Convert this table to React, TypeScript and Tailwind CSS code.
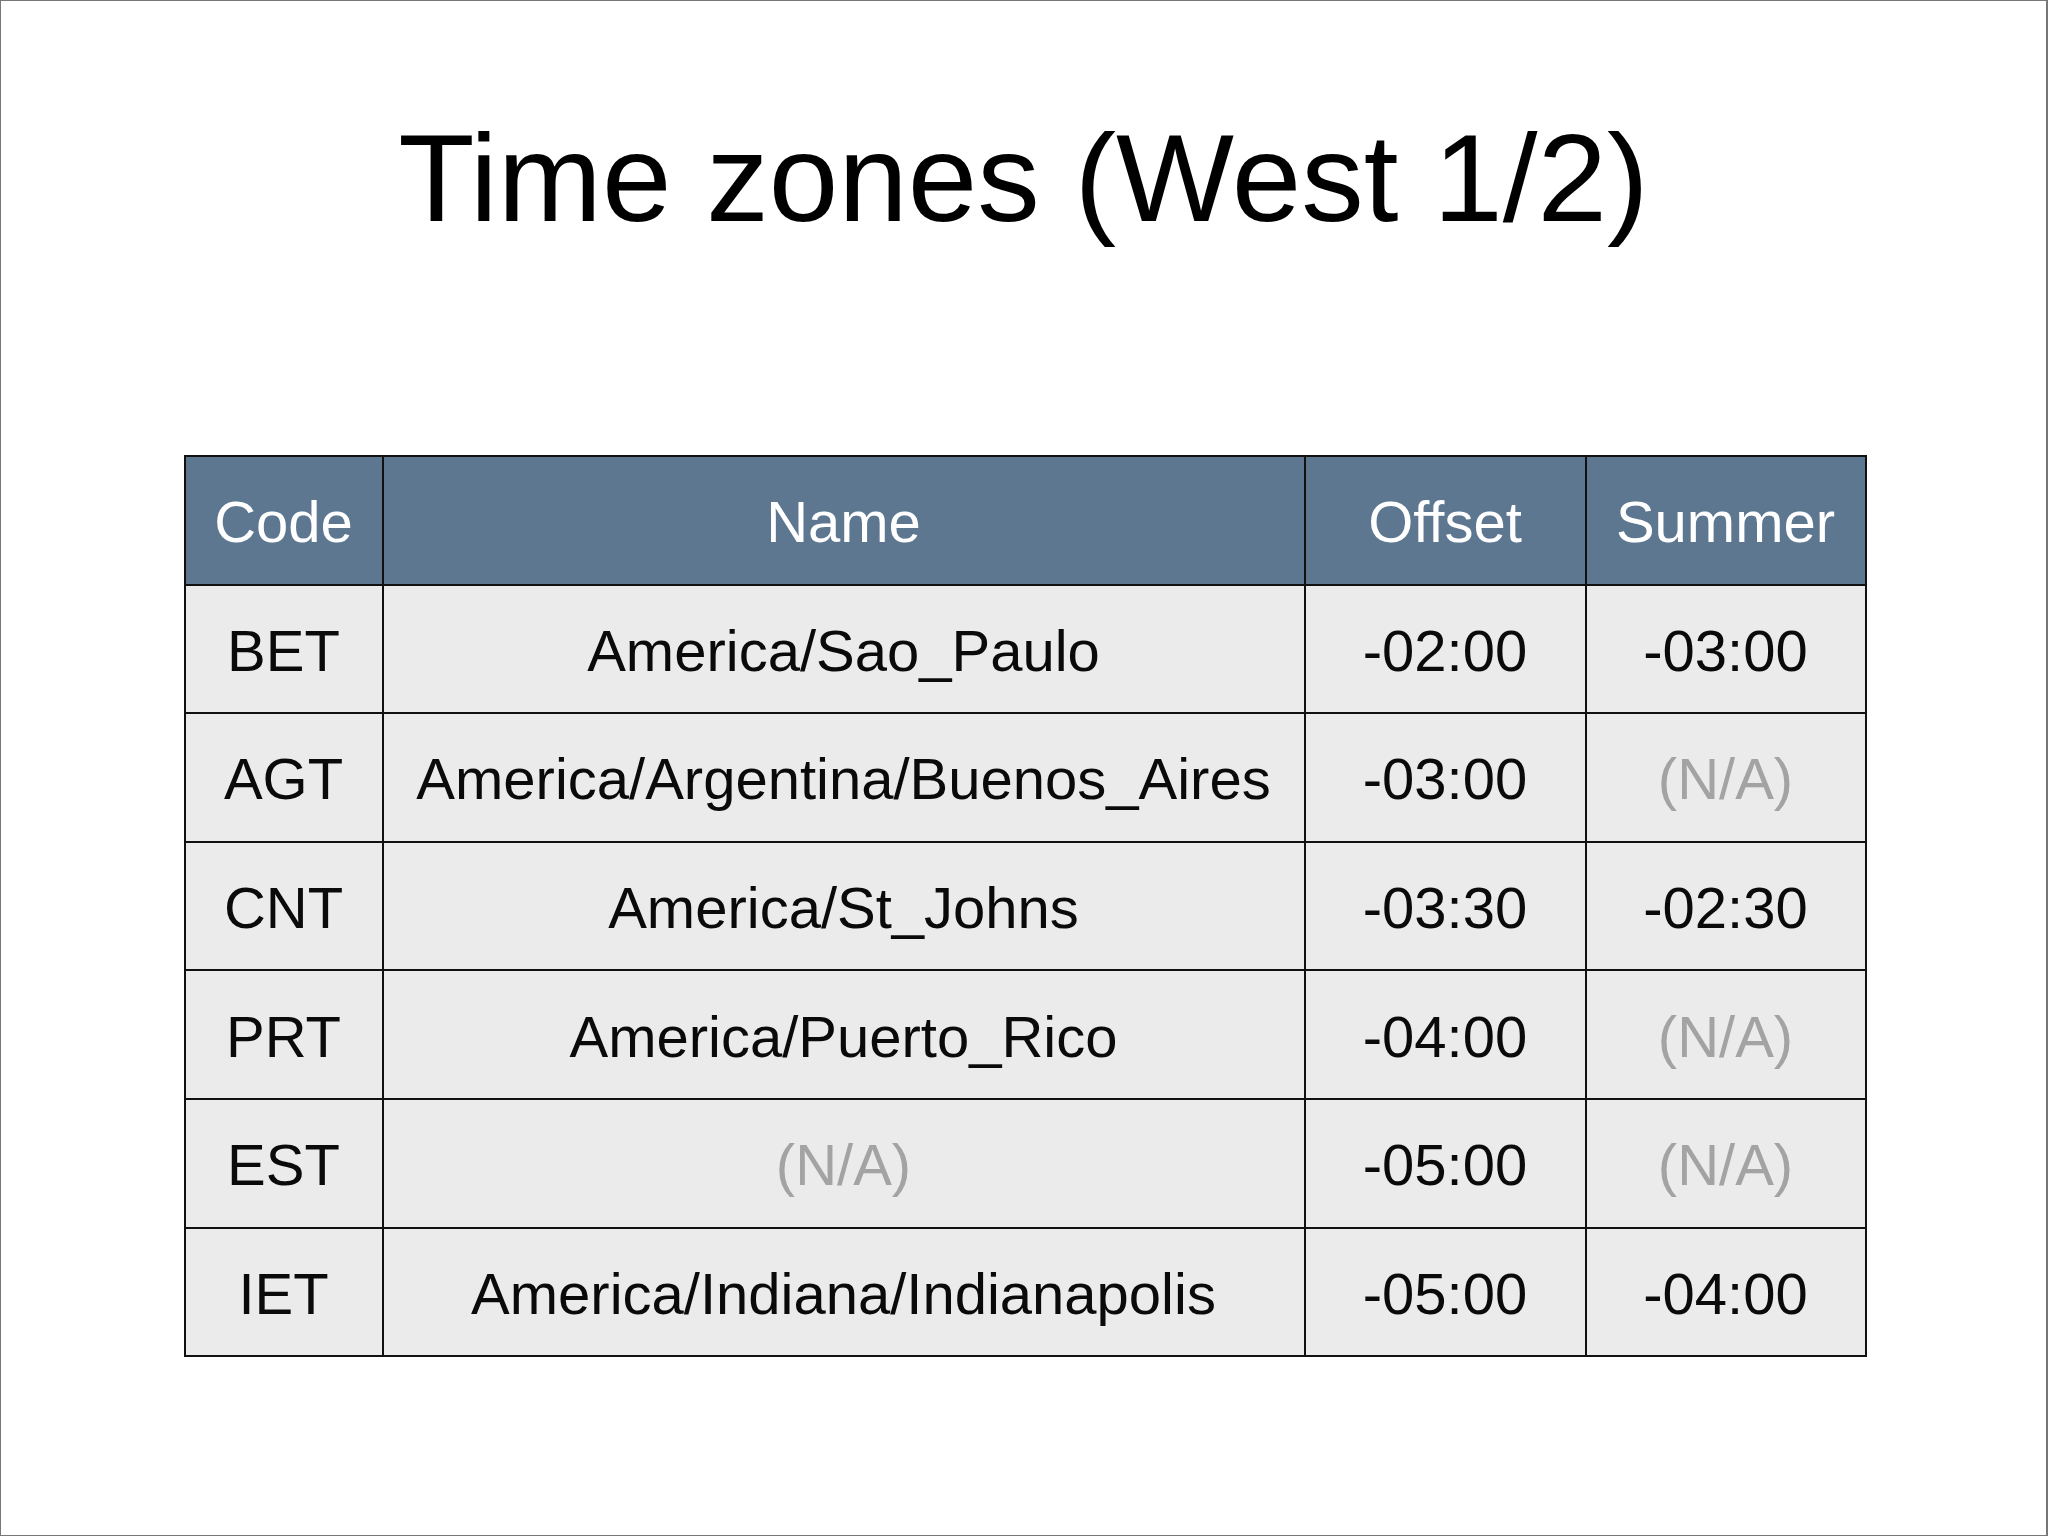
const rows = [
  { code: "BET", name: "America/Sao_Paulo", offset: "-02:00", summer: "-03:00" },
  { code: "AGT", name: "America/Argentina/Buenos_Aires", offset: "-03:00", summer: null },
  { code: "CNT", name: "America/St_Johns", offset: "-03:30", summer: "-02:30" },
  { code: "PRT", name: "America/Puerto_Rico", offset: "-04:00", summer: null },
  { code: "EST", name: null, offset: "-05:00", summer: null },
  { code: "IET", name: "America/Indiana/Indianapolis", offset: "-05:00", summer: "-04:00" },
]

function Cell({ value, header }: { value: string | null; header?: boolean }) {
  const base = "flex h-[126.6px] items-center justify-center pt-[4px] text-[58px] leading-none whitespace-nowrap"
  if (header) {
    return <div className={`${base} bg-[#5d7791] text-white`}>{value}</div>
  }
  return (
    <div className={`${base} bg-[#ebebeb] ${value ? "text-[#0a0a0a]" : "text-[#a3a3a3]"}`}>
      {value ?? "(N/A)"}
    </div>
  )
}

export default function App() {
  return (
    <div
      className="flex h-[1536px] w-[2048px] flex-col items-center border border-r-2 border-[#777777] bg-white"
      style={{ fontFamily: '"Liberation Sans", Arial, sans-serif' }}
    >
      <h1 className="mt-[114px] text-[125px] leading-none text-black">Time zones (West 1/2)</h1>

      <div className="mt-[215px] ml-[3px] grid grid-cols-[196px_920px_279px_278px] gap-[2px] bg-[#111111] p-[2px]">
        <Cell header value="Code" />
        <Cell header value="Name" />
        <Cell header value="Offset" />
        <Cell header value="Summer" />
        {rows.map((r) => (
          <div key={r.code} className="contents">
            <Cell value={r.code} />
            <Cell value={r.name} />
            <Cell value={r.offset} />
            <Cell value={r.summer} />
          </div>
        ))}
      </div>
    </div>
  )
}
